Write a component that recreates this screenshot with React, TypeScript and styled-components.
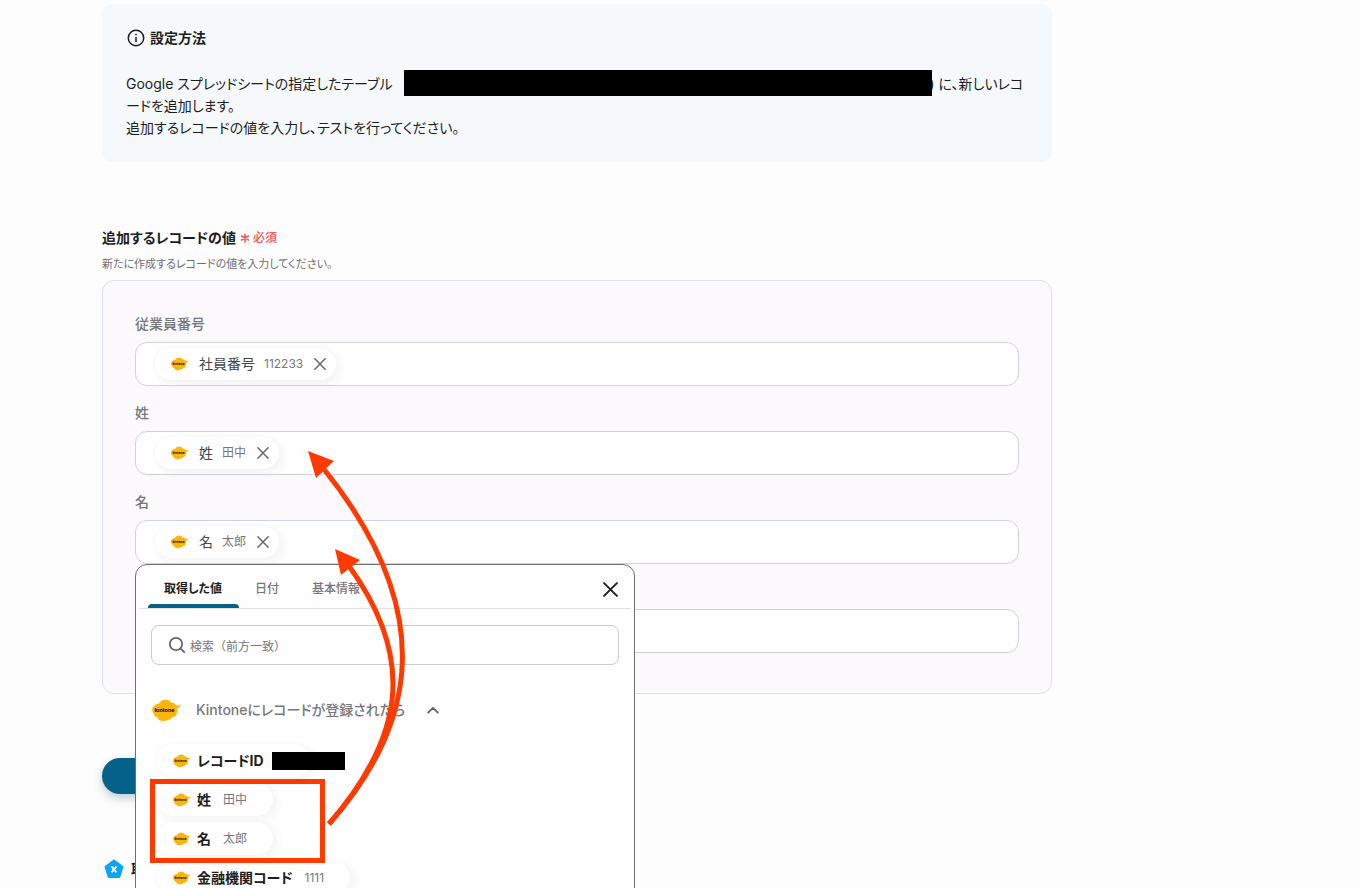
import React from "react";
import styled, { createGlobalStyle } from "styled-components";

const GlobalStyle = createGlobalStyle`
  *, *::before, *::after { box-sizing: border-box; }
  body {
    margin: 0;
    background: #fdfdfd;
    color: #1c1d20;
    font-family: Inter, "Noto Sans CJK JP", sans-serif;
    font-size: 14px;
    line-height: 22px;
    font-feature-settings: "palt" 1;
  }
  button, input { font: inherit; font-feature-settings: inherit; color: inherit; }
  button { border: 0; padding: 0; background: none; cursor: pointer; }
  p, h2, h3 { margin: 0; font-size: inherit; }
  svg { display: block; flex: none; }
`;

const Page = styled.main`
  position: relative;
  min-height: 100vh;
  padding: 4px 308px 0 102px;
  overflow: hidden;
`;

const InfoBox = styled.section`
  padding: 23px 24px;
  border-radius: 10px;
  background: #f5f9fc;
`;

const InfoTitle = styled.h2`
  display: flex;
  align-items: center;
  gap: 4px;
  margin-bottom: 24px;
  font-weight: 700;
`;

const InfoText = styled.p`
  white-space: nowrap;
`;

const Redaction = styled.span<{ $width: number; $height: number }>`
  display: inline-block;
  position: relative;
  width: ${(p) => p.$width}px;
  height: ${(p) => p.$height}px;
  vertical-align: middle;
  background: #000;
`;

const HiddenName = styled(Redaction)`
  margin: -6px -3px -2px 12px;
`;

const FormHeading = styled.div`
  display: flex;
  align-items: center;
  gap: 3px;
  margin-top: 65px;
`;

const FormTitle = styled.h3`
  font-weight: 700;
`;

const Required = styled.span`
  display: flex;
  align-items: center;
  gap: 2px;
  color: #ff5050;
  font-size: 12px;
  font-weight: 500;
`;

const Hint = styled.p`
  margin: 4px 0 5px;
  color: #6e6e73;
  font-size: 11px;
`;

const Panel = styled.section`
  display: flex;
  flex-direction: column;
  gap: 16px;
  padding: 32px 32px 40px;
  border: 1px solid #e0e1e8;
  border-radius: 12px;
  background: #fbf9fc;
`;

const Field = styled.div`
  position: relative;
  display: flex;
  flex-direction: column;
  gap: 8px;
`;

const FieldLabel = styled.label`
  min-height: 21px;
  line-height: 21px;
  color: #76757a;
  font-weight: 500;
`;

const FieldBox = styled.div`
  display: flex;
  align-items: center;
  height: 44px;
  padding: 0 19px;
  border: 1px solid #d0d3de;
  border-radius: 12px;
  background: #fefefe;
`;

const FieldInput = styled.input`
  flex: 1;
  min-width: 0;
  border: 0;
  outline: none;
  background: transparent;
`;

const Chip = styled.span`
  display: flex;
  align-items: center;
  height: 32px;
  padding: 0 10px 0 16px;
  border-radius: 16px;
  background: #fff;
  box-shadow: 4px 4px 8px rgba(60, 50, 80, 0.05), -1px -1px 4px rgba(60, 50, 80, 0.03);
`;

const ChipName = styled.span`
  margin: 0 9px 0 10px;
  color: #45454a;
`;

const ChipValue = styled.span`
  color: #77777b;
  font-size: 12px;
`;

const RemoveButton = styled.button`
  margin-left: 11px;
  color: #66666a;
`;

const Popup = styled.div`
  position: absolute;
  z-index: 2;
  top: 100%;
  left: 0;
  width: 500px;
  height: 420px;
  border: 1px solid #6f6f72;
  border-radius: 12px;
  background: #fefefe;
`;

const PopupHeader = styled.div`
  display: flex;
  align-items: center;
  justify-content: space-between;
  height: 44px;
  margin: 0 3px;
  padding: 0 13px 0 9px;
  border-bottom: 1px solid #e3e3e5;
`;

const Tabs = styled.div`
  display: flex;
  align-self: stretch;
  gap: 1px;
`;

const Tab = styled.button<{ $active?: boolean }>`
  position: relative;
  padding: 4px 16px 0;
  color: ${(p) => (p.$active ? "#1c1d20" : "#77777b")};
  font-size: 12px;
  font-weight: ${(p) => (p.$active ? 700 : 500)};
  &::after {
    content: "";
    display: ${(p) => (p.$active ? "block" : "none")};
    position: absolute;
    right: -1px;
    bottom: 0;
    left: 0;
    height: 4px;
    border-radius: 4px 4px 0 0;
    background: #05608a;
  }
`;

const CloseButton = styled.button`
  padding-top: 5px;
`;

const SearchBox = styled.label`
  display: flex;
  align-items: center;
  gap: 4px;
  height: 40px;
  margin: 16px 15px 0;
  padding: 0 16px;
  border: 1px solid #c9cacd;
  border-radius: 8px;
  color: #66666a;
`;

const SearchInput = styled(FieldInput)`
  padding: 4px 0 0;
  font-size: 12px;
  font-feature-settings: normal;
  &::placeholder { color: #77777b; opacity: 1; }
`;

const GroupButton = styled.button`
  display: flex;
  align-items: center;
  height: 24px;
  margin: 33px 0 0 16px;
  color: #77777b;
  font-weight: 500;
`;

const GroupName = styled.span`
  margin: 0 22px 0 14px;
`;

const Options = styled.ul`
  display: flex;
  flex-direction: column;
  align-items: flex-start;
  gap: 6px;
  margin: 22px 0 0 21px;
  padding: 0;
  list-style: none;
`;

const Option = styled.button`
  display: flex;
  align-items: center;
  height: 33px;
  padding: 0 26px 0 16px;
  border-radius: 17px;
  background: #fefefe;
  box-shadow: 4px 4px 10px rgba(60, 50, 80, 0.05), -1px -1px 4px rgba(60, 50, 80, 0.02);
  font-weight: 700;
  white-space: nowrap;
`;

const OptionName = styled.span`
  margin-left: 6px;
`;

const OptionValue = styled(ChipValue)`
  margin-left: 12px;
  font-weight: 400;
`;

const HiddenId = styled(Redaction)`
  margin-left: 8px;
  margin-right: -60px;
`;

const Highlight = styled.div`
  position: absolute;
  top: 214px;
  left: 14px;
  width: 175px;
  height: 84px;
  border: 5px solid #ff3a00;
`;

const Arrows = styled.svg`
  position: absolute;
  top: -117px;
  left: 169px;
  pointer-events: none;
`;

const SubmitButton = styled.button`
  display: block;
  width: 160px;
  height: 36px;
  margin-top: 64px;
  border-radius: 18px;
  background: #05608a;
  box-shadow: 0 4px 10px rgba(5, 60, 90, 0.25);
  color: #fff;
  font-weight: 700;
`;

const ResultHeading = styled.div`
  display: flex;
  align-items: center;
  gap: 7px;
  margin-top: 64px;
  padding-left: 2px;
  font-weight: 700;
`;

function KintoneLogo({ width }: { width: number }) {
  return (
    <svg width={width} height={Math.round(width * 0.75)} viewBox="0 0 30 22" aria-hidden="true">
      <path
        d="M.2 10.500C.1 8.600 1 7.200 2.500 6.600 2.800 5 4.800 4 7 4.300 8 1.800 10.200.4 12.600.6c1-.6 3.200-.6 5.100.8.8.6 1.300 1.300 1.600 2 1.800-.3 3.600.3 4.300 1.800l1.100.9 5-.6-3.500 2.900c-.9.300-1.100.8-.9 1.500.7 1.600.2 2.800-.8 3.500.4 2-1.200 3.800-3.900 4.100-.9 1.600-2.500 2.300-4.300 2.400-2 1.800-6.500 2.300-8.700.9-1.700-.9-2.300-2-1.900-3.300-2.200.1-3.700-1-3.500-2.800C.9 14 .200 12.500.200 10.500z"
        fill="#fdb50b"
      />
      <text x="12.500" y="12.500" textAnchor="middle" fontFamily="Inter, sans-serif" fontSize="5.400" fontWeight="800" fill="#2a1c05">
        kintone
      </text>
    </svg>
  );
}

function Cross({ size, weight }: { size: number; weight: number }) {
  return (
    <svg width={size} height={size} viewBox="0 0 14 14" fill="none" stroke="currentColor" strokeWidth={weight} strokeLinecap="round">
      <path d="M1 1l12 12M13 1L1 13" />
    </svg>
  );
}

function ValueChip({ name, value }: { name: string; value: string }) {
  return (
    <Chip>
      <KintoneLogo width={18} />
      <ChipName>{name}</ChipName>
      <ChipValue>{value}</ChipValue>
      <RemoveButton type="button" aria-label={`${name}を削除`}>
        <Cross size={12} weight={1.7} />
      </RemoveButton>
    </Chip>
  );
}

function ValuePicker() {
  return (
    <Popup>
      <PopupHeader>
        <Tabs role="tablist">
          <Tab type="button" role="tab" aria-selected $active>取得した値</Tab>
          <Tab type="button" role="tab">日付</Tab>
          <Tab type="button" role="tab">基本情報</Tab>
        </Tabs>
        <CloseButton type="button" aria-label="閉じる">
          <Cross size={15} weight={1.8} />
        </CloseButton>
      </PopupHeader>
      <SearchBox>
        <svg width="18" height="18" viewBox="0 0 18 18" fill="none" stroke="currentColor" strokeWidth="1.800" strokeLinecap="round">
          <circle cx="8" cy="8" r="6.200" />
          <path d="M12.600 12.600L16.200 16.200" />
        </svg>
        <SearchInput type="text" placeholder="検索（前方一致）" />
      </SearchBox>
      <GroupButton type="button" aria-expanded>
        <KintoneLogo width={30} />
        <GroupName>Kintoneにレコードが登録されたら</GroupName>
        <svg width="12" height="8" viewBox="0 0 12 8" fill="none" stroke="#66666a" strokeWidth="1.800" strokeLinecap="round" strokeLinejoin="round">
          <path d="M1.200 6.500L6 1.800l4.800 4.700" />
        </svg>
      </GroupButton>
      <Options>
        <li>
          <Option type="button">
            <KintoneLogo width={18} />
            <OptionName>レコードID</OptionName>
            <HiddenId $width={73} $height={18} />
          </Option>
        </li>
        {[
          ["姓", "田中"],
          ["名", "太郎"],
          ["金融機関コード", "1111"],
        ].map(([name, value]) => (
          <li key={name}>
            <Option type="button">
              <KintoneLogo width={18} />
              <OptionName>{name}</OptionName>
              <OptionValue>{value}</OptionValue>
            </Option>
          </li>
        ))}
      </Options>
      <Highlight />
      <Arrows width="110" height="380" viewBox="0 0 110 380" fill="none" stroke="#ff3a00" strokeWidth="5">
        <path d="M24 376C100 290 144 176 18 20" />
        <path d="M24 376C98 290 112 212 44 118" />
        <path d="M3 3l26 10-18 17z" fill="#ff3a00" stroke="none" />
        <path d="M30 101l25 11-19 15z" fill="#ff3a00" stroke="none" />
      </Arrows>
    </Popup>
  );
}

export default function App() {
  return (
    <Page lang="ja">
      <GlobalStyle />
      <InfoBox>
        <InfoTitle>
          <svg width="20" height="20" viewBox="0 0 20 20" fill="none" stroke="currentColor" strokeWidth="1.500">
            <circle cx="10" cy="10" r="7.700" />
            <path d="M10 9v5" />
            <circle cx="10" cy="6.600" r=".9" fill="currentColor" stroke="none" />
          </svg>
          設定方法
        </InfoTitle>
        <InfoText>
          Google スプレッドシートの指定したテーブル
          <HiddenName $width={528} $height={26} />) に、新しいレコ
          <br />
          ードを追加します。
          <br />
          追加するレコードの値を入力し、テストを行ってください。
        </InfoText>
      </InfoBox>

      <FormHeading>
        <FormTitle>追加するレコードの値</FormTitle>
        <Required>
          <svg width="12" height="12" viewBox="0 0 12 12" fill="none" stroke="currentColor" strokeWidth="1.600" strokeLinecap="round">
            <path d="M6 2v8M2.500 4l7 4M9.500 4l-7 4" />
          </svg>
          必須
        </Required>
      </FormHeading>
      <Hint>新たに作成するレコードの値を入力してください。</Hint>

      <Panel>
        <Field>
          <FieldLabel htmlFor="employee">従業員番号</FieldLabel>
          <FieldBox>
            <ValueChip name="社員番号" value="112233" />
            <FieldInput id="employee" type="text" />
          </FieldBox>
        </Field>
        <Field>
          <FieldLabel htmlFor="family">姓</FieldLabel>
          <FieldBox>
            <ValueChip name="姓" value="田中" />
            <FieldInput id="family" type="text" />
          </FieldBox>
        </Field>
        <Field>
          <FieldLabel htmlFor="given">名</FieldLabel>
          <FieldBox>
            <ValueChip name="名" value="太郎" />
            <FieldInput id="given" type="text" />
          </FieldBox>
          <ValuePicker />
        </Field>
        <Field>
          <FieldLabel htmlFor="extra" />
          <FieldBox>
            <FieldInput id="extra" type="text" />
          </FieldBox>
        </Field>
      </Panel>

      <SubmitButton type="button">テスト</SubmitButton>
      <ResultHeading>
        <svg width="20" height="20" viewBox="0 0 20 20">
          <path d="M10 1.500l8.500 6.200-3.200 10.300H4.700L1.500 7.700z" fill="#0aa5f5" stroke="#0aa5f5" strokeWidth="2" strokeLinejoin="round" />
          <path d="M7.600 7.400l4.800 6M12.400 7.400l-4.800 6" stroke="#fff" strokeWidth="1.700" />
        </svg>
        取得した値
      </ResultHeading>
    </Page>
  );
}
